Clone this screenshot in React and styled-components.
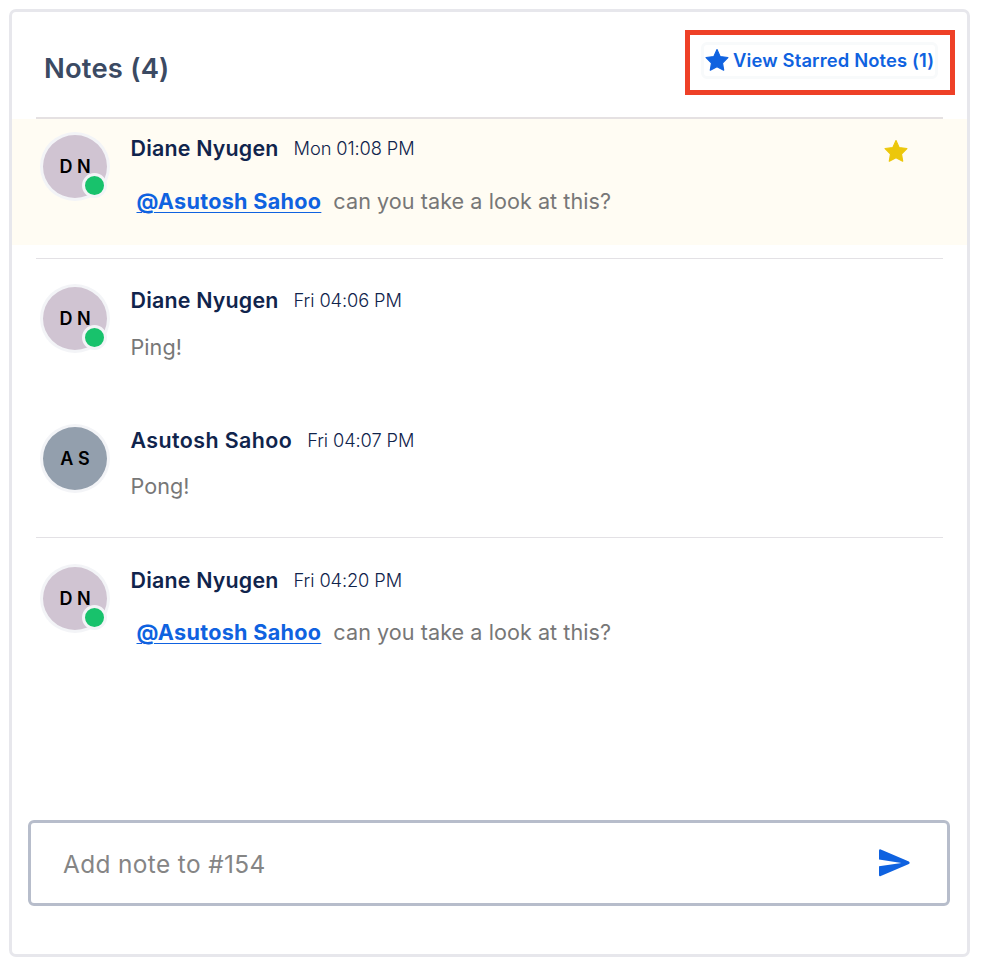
import React from "react";
import styled, { createGlobalStyle } from "styled-components";

const GlobalStyle = createGlobalStyle`
  * { box-sizing: border-box; }
  body {
    margin: 0;
    background: #fff;
    font-family: Inter, Roboto, sans-serif;
  }
`;

const Panel = styled.main`
  width: 961px;
  height: 948px;
  margin: 9px 0 0 9px;
  border: 3px solid #e7e7ec;
  border-radius: 7px;
  background: #fff;
  display: flex;
  flex-direction: column;
`;

const Header = styled.header`
  height: 105px;
  padding: 18px 12px 0 32px;
  display: flex;
  align-items: flex-start;
  justify-content: space-between;
`;

const Title = styled.h1`
  margin: 20px 0 0;
  font-size: 27.4px;
  line-height: 36px;
  font-weight: 560;
  letter-spacing: 0.2px;
  color: #3b4a63;
`;

const Callout = styled.div`
  width: 270px;
  height: 65px;
  border: 5px solid #ee4027;
  padding: 7px 0 0 11px;
`;

const StarredButton = styled.button`
  width: 237px;
  height: 37px;
  border: 3px solid #f8fafb;
  border-radius: 6px;
  background: #fff;
  padding: 0 0 2px 1px;
  display: flex;
  align-items: center;
  gap: 4px;
  font-family: inherit;
  font-size: 18.4px;
  line-height: 24px;
  font-weight: 560;
  letter-spacing: 0.14px;
  white-space: nowrap;
  color: #0f62e0;
`;

const StarIcon = styled.svg`
  flex: none;
  width: 24px;
  height: 24px;
  fill: ${(p) => p.$color};
  stroke: ${(p) => p.$color};
  stroke-width: 1.2;
  stroke-linejoin: round;
`;

const Divider = styled.hr`
  flex: none;
  width: 907px;
  height: ${(p) => p.$size}px;
  margin: 0 0 0 24px;
  border: 0;
  background: ${(p) => (p.$size > 1 ? "#e5e1e2" : "#e3e1e5")};
`;

const NoteRow = styled.article`
  flex: none;
  height: ${(p) => p.$height}px;
  padding: ${(p) => p.$top}px 59px 0 28px;
  display: flex;
  background: ${(p) => (p.$starred ? "#fffcf3" : "transparent")};
  margin-bottom: ${(p) => (p.$starred ? 13 : 0)}px;
`;

const Avatar = styled.div`
  position: relative;
  flex: none;
  width: 70px;
  height: 69px;
  border: 3px solid #f3f4f7;
  border-radius: 50%;
  background: ${(p) => p.$color};
  display: flex;
  align-items: center;
  justify-content: center;
  font-size: 18px;
  font-weight: 600;
  color: #000;
`;

const Presence = styled.i`
  position: absolute;
  left: 39px;
  top: 38px;
  width: 25px;
  height: 25px;
  border: 3px solid #f3f4f7;
  border-radius: 50%;
  background: #18c26c;
`;

const NoteContent = styled.div`
  flex: 1;
  padding-left: 20.5px;
`;

const NoteMeta = styled.div`
  height: 32px;
  display: flex;
  align-items: flex-start;
  gap: 15px;
`;

const Author = styled.strong`
  font-size: 21.4px;
  line-height: 32px;
  font-weight: 600;
  letter-spacing: ${(p) => p.$tracking}px;
  color: #10244c;
`;

const Time = styled.time`
  font-size: 18.3px;
  line-height: 32px;
  font-weight: 300;
  letter-spacing: -0.12px;
  color: #10244c;
`;

const Message = styled.p`
  margin: ${(p) => p.$gap}px 0 0;
  font-size: 21.6px;
  line-height: 30px;
  letter-spacing: 0.05px;
  color: #777;
`;

const Mention = styled.a`
  margin: 0 12px 0 6px;
  font-weight: 700;
  letter-spacing: 0.3px;
  color: #0f62e0;
  text-decoration: underline;
  text-decoration-thickness: 1px;
  text-underline-offset: 3px;
  text-decoration-skip-ink: auto;
`;

const RowStar = styled.div`
  padding-top: 7px;
  height: 31px;
`;

const Composer = styled.form`
  width: 922px;
  height: 86px;
  margin: auto 0 48px 16px;
  border: 3px solid #b7bdcb;
  border-radius: 6px;
  padding: 0 37px 0 32px;
  display: flex;
  align-items: center;
  justify-content: space-between;
`;

const NoteInput = styled.input`
  width: 600px;
  border: 0;
  padding: 2px 0 0;
  outline: 0;
  background: transparent;
  font-family: inherit;
  font-size: 24.4px;
  letter-spacing: 0.38px;
  line-height: 34px;
  &::placeholder {
    color: #858585;
    opacity: 1;
  }
`;

const SendButton = styled.button`
  width: 32px;
  height: 28px;
  padding: 0;
  border: 0;
  background: none;
  display: flex;
`;

function Star({ color }) {
  return (
    <StarIcon $color={color} viewBox="0 0 24 24" aria-hidden="true">
      <path d="M12 1.6 15.1 8.5 22.9 9.5 17.5 15 18.7 22.2 12 18.8 5.3 22.2 6.5 15 1.1 9.5 8.9 8.5Z" />
    </StarIcon>
  );
}

const DIANE = { name: "Diane Nyugen", initials: "D N", color: "#d0c4d2", tracking: 0.2, online: true };
const ASUTOSH = { name: "Asutosh Sahoo", initials: "A S", color: "#939fad", tracking: 0.42, online: false };

function Note({ author, time, mention, text, starred, height, top, gap }) {
  return (
    <NoteRow $height={height} $top={top} $starred={starred}>
      <Avatar $color={author.color}>
        {author.initials}
        {author.online && <Presence />}
      </Avatar>
      <NoteContent>
        <NoteMeta>
          <Author $tracking={author.tracking}>{author.name}</Author>
          <Time>{time}</Time>
        </NoteMeta>
        <Message $gap={gap}>
          {mention && <Mention>{mention}</Mention>}
          {text}
        </Message>
      </NoteContent>
      {starred && (
        <RowStar>
          <Star color="#ecc70b" />
        </RowStar>
      )}
    </NoteRow>
  );
}

export default function App() {
  return (
    <>
      <GlobalStyle />
      <Panel>
        <Header>
          <Title>Notes (4)</Title>
          <Callout>
            <StarredButton type="button">
              <Star color="#0f62e0" />
              View Starred Notes (1)
            </StarredButton>
          </Callout>
        </Header>
        <Divider $size={2} />
        <Note author={DIANE} time="Mon 01:08 PM" mention="@Asutosh Sahoo" text="can you take a look at this?" starred height={126} top={13} gap={22} />
        <Divider $size={1} />
        <Note author={DIANE} time="Fri 04:06 PM" text="Ping!" height={140} top={25} gap={16} />
        <Note author={ASUTOSH} time="Fri 04:07 PM" text="Pong!" height={138} top={25} gap={15} />
        <Divider $size={1} />
        <Note author={DIANE} time="Fri 04:20 PM" mention="@Asutosh Sahoo" text="can you take a look at this?" height={130} top={26} gap={21} />
        <Composer>
          <NoteInput placeholder="Add note to #154" />
          <SendButton type="button" aria-label="Send">
            <svg width="32" height="28" viewBox="0 0 32 28" aria-hidden="true">
              <path
                fill="#0f62e0"
                d="M1 1.5Q1.2-.1 2.8.5L30.9 12.4Q32.4 13.8 30.9 15.1L2.8 27.1Q1.2 27.8 1 26.2V17.2L23.5 13.9 1 10.6Z"
              />
            </svg>
          </SendButton>
        </Composer>
      </Panel>
    </>
  );
}
